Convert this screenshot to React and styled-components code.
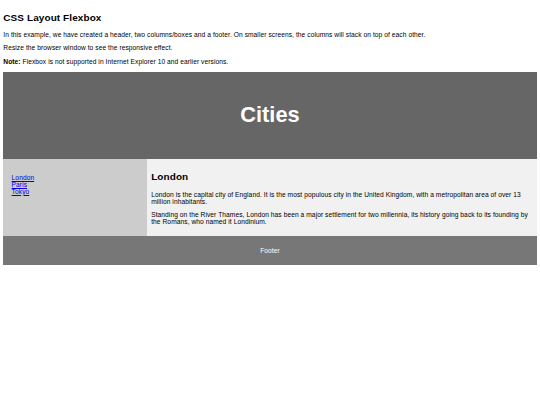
import React from "react";
import styled, { createGlobalStyle } from "styled-components";

const Global = createGlobalStyle`
  * { box-sizing: border-box; }
  html, body { background: #fff; }
  body {
    margin: 3.32px;
    font-family: "Liberation Sans", Arial, Helvetica, sans-serif;
    font-size: 6.65px;
    letter-spacing: 0.065px;
    color: #000;
  }
  p { margin: 6.65px 0; }
`;

const Title = styled.h2`
  font-size: 9.97px;
  font-weight: bold;
  letter-spacing: 0.1px;
  margin: 8.27px 0;
`;

const Header = styled.header`
  background-color: #666;
  padding: 12.46px;
  text-align: center;
  font-size: 14.54px;
  color: white;

  h2 {
    font-size: 21.8px;
    letter-spacing: 0;
    margin: 18.1px 0;
  }
`;

const Section = styled.section`
  display: flex;
`;

const Nav = styled.nav`
  flex: 1;
  background: #ccc;
  padding: 8.31px;
`;

const NavList = styled.ul`
  list-style-type: none;
  padding: 0;
  margin: 6.65px 0;

  a { color: #0000ee; }
`;

const Article = styled.article`
  flex: 3;
  background-color: #f1f1f1;
  padding: 4.15px;

  h2 {
    font-size: 9.97px;
    letter-spacing: 0.1px;
    margin: 8.27px 0;
  }
`;

const Footer = styled.footer`
  background-color: #777;
  padding: 4.15px;
  text-align: center;
  color: white;
`;

export default function App() {
  return (
    <>
      <Global />
      <Title>CSS Layout Flexbox</Title>
      <p>
        In this example, we have created a header, two columns/boxes and a footer. On smaller
        screens, the columns will stack on top of each other.
      </p>
      <p>Resize the browser window to see the responsive effect.</p>
      <p>
        <strong>Note:</strong> Flexbox is not supported in Internet Explorer 10 and earlier
        versions.
      </p>
      <Header>
        <h2>Cities</h2>
      </Header>
      <Section>
        <Nav>
          <NavList>
            <li><a href="#">London</a></li>
            <li><a href="#">Paris</a></li>
            <li><a href="#">Tokyo</a></li>
          </NavList>
        </Nav>
        <Article>
          <h2>London</h2>
          <p>
            London is the capital city of England. It is the most populous city in the United
            Kingdom, with a metropolitan area of over 13 million inhabitants.
          </p>
          <p>
            Standing on the River Thames, London has been a major settlement for two millennia,
            its history going back to its founding by the Romans, who named it Londinium.
          </p>
        </Article>
      </Section>
      <Footer>
        <p>Footer</p>
      </Footer>
    </>
  );
}
